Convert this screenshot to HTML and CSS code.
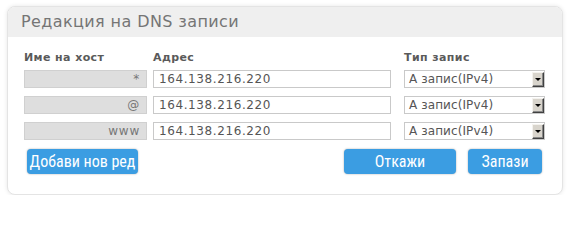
FILE: index.html
```html
<!DOCTYPE html>
<html lang="bg">
<head>
<meta charset="utf-8">
<title>Редакция на DNS записи</title>
<link rel="stylesheet" href="styles.css">
</head>
<body>
<div class="panel">
  <div class="header">Редакция на DNS записи</div>
  <div class="form">
    <div class="label">Име на хост</div>
    <div class="label">Адрес</div>
    <div class="label">Тип запис</div>

    <div class="host">*</div>
    <div class="addr">164.138.216.220</div>
    <div class="select"><span>A запис(IPv4)</span><span class="arrow"></span></div>

    <div class="host">@</div>
    <div class="addr">164.138.216.220</div>
    <div class="select"><span>A запис(IPv4)</span><span class="arrow"></span></div>

    <div class="host">www</div>
    <div class="addr">164.138.216.220</div>
    <div class="select"><span>A запис(IPv4)</span><span class="arrow"></span></div>

    <div class="actions">
      <button class="btn btn-add">Добави нов ред</button>
      <div class="right">
        <button class="btn btn-cancel">Откажи</button>
        <button class="btn btn-save">Запази</button>
      </div>
    </div>
  </div>
</div>
</body>
</html>
```
FILE: styles.css
```css
* { box-sizing: border-box; }
html, body { margin: 0; padding: 0; background: #fff; }
body { font-family: "DejaVu Sans", Verdana, sans-serif; }

.panel {
  margin: 6px 0 0 7px;
  width: 556px;
  height: 189px;
  border: 1px solid #e4e4e4;
  border-radius: 8px;
  box-shadow: 0 0 4px rgba(0,0,0,0.10);
  overflow: hidden;
  background: #fff;
}

.header {
  height: 30px;
  background: #efefef;
  padding-left: 13px;
  line-height: 30px;
  font-size: 16px;
  color: #757575;
  letter-spacing: 0.4px;
}

.form {
  display: grid;
  grid-template-columns: 123px 244px 154px;
  row-gap: 8px;
  padding: 14px 0 0 16px;
}
.form > :nth-child(3n+2) { margin-left: 6px; }
.form > :nth-child(3n) { margin-left: 13px; }

.label {
  font-size: 11px;
  font-weight: bold;
  color: #5a5a5a;
  line-height: 13px;
  letter-spacing: 0.4px;
  margin-bottom: -2px;
}

.host, .addr, .select {
  height: 18px;
  font-size: 12px;
  line-height: 16px;
  color: #555;
}

.host {
  background: #dedede;
  border: 1px solid #d0d0d0;
  text-align: right;
  padding-right: 6px;
  color: #777;
  letter-spacing: 0.8px;
}

.addr {
  border: 1px solid #c9c9c9;
  padding-left: 5px;
  letter-spacing: 0.6px;
}

.select {
  border: 1px solid #c9c9c9;
  padding-left: 4px;
  display: flex;
  justify-content: space-between;
  align-items: center;
  color: #555;
  letter-spacing: 0.1px;
}

.arrow {
  width: 12px;
  height: 15px;
  background: #d8d4cc;
  border-top: 1px solid #f4f2ee;
  border-left: 1px solid #f4f2ee;
  border-right: 1px solid #404040;
  border-bottom: 1px solid #404040;
  box-shadow: inset -1px -1px 0 #888;
  position: relative;
}
.arrow::after {
  content: "";
  position: absolute;
  left: 2px;
  top: 5px;
  border-left: 3px solid transparent;
  border-right: 3px solid transparent;
  border-top: 3px solid #000;
}

.actions {
  grid-column: 1 / 4;
  margin-left: 0 !important;
  margin-top: 1px;
  display: flex;
  justify-content: space-between;
  padding: 0 3px;
}
.right { display: flex; gap: 12px; }

.btn {
  height: 25px;
  border: none;
  border-radius: 4px;
  background: #3b9de2;
  color: #fff;
  font-family: "Liberation Sans Narrow", "Roboto Condensed", "Roboto", sans-serif;
  font-stretch: condensed;
  font-size: 16px;
  padding: 0;
  box-shadow: 0 0 2px rgba(0,0,0,0.35);
  cursor: pointer;
}
.btn-add { width: 111px; }
.btn-cancel { width: 112px; }
.btn-save { width: 74px; }
```
